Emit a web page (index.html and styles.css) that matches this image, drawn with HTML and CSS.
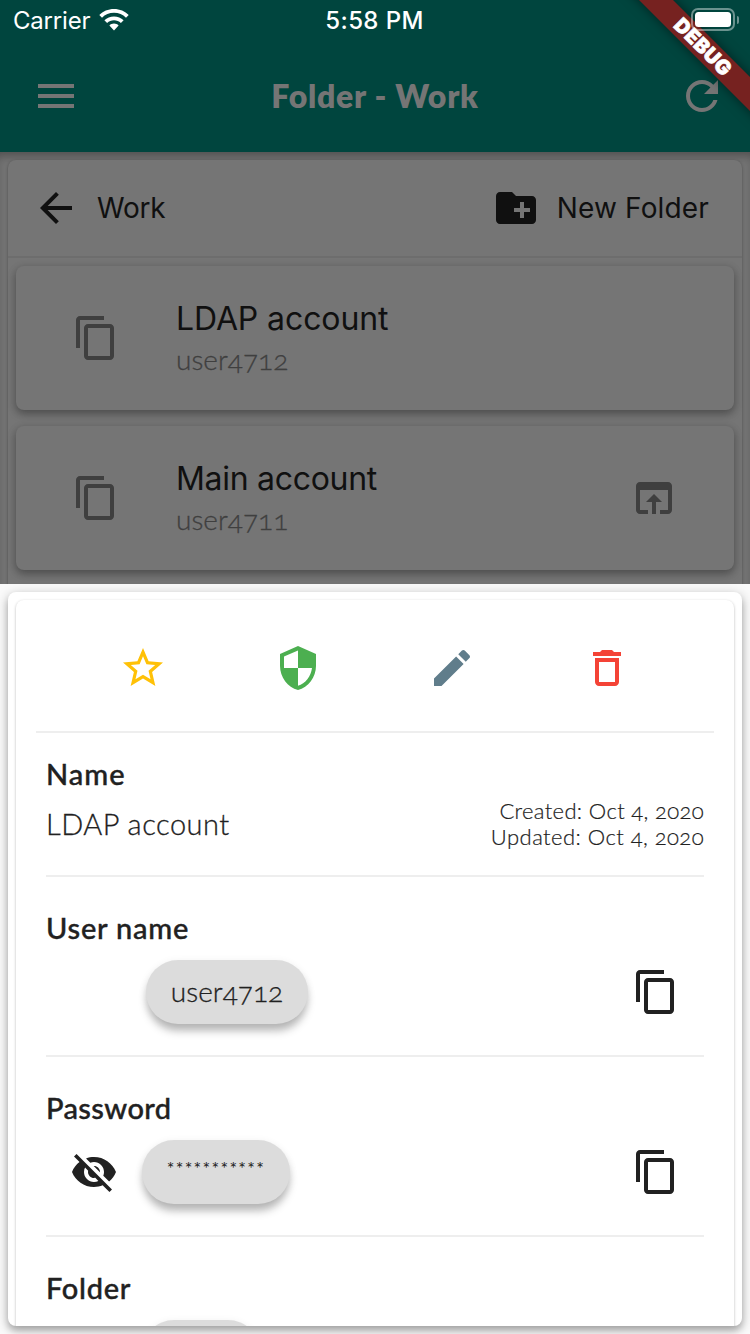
FILE: index.html
```html
<!DOCTYPE html>
<html lang="en">
<head>
<meta charset="utf-8">
<title>Folder - Work</title>
<link rel="stylesheet" href="styles.css">
</head>
<body>
<svg class="defs" aria-hidden="true">
  <symbol id="copy" viewBox="0 0 24 24"><path d="M16 1H4c-1.1 0-2 .9-2 2v14h2V3h12V1zm3 4H8c-1.1 0-2 .9-2 2v14c0 1.1.9 2 2 2h11c1.1 0 2-.9 2-2V7c0-1.1-.9-2-2-2zm0 16H8V7h11v14z"/></symbol>
</svg>
<div class="screen">
  <header class="appbar">
    <div class="status">
      <div class="carrier"><span class="carrier-name">Carrier</span>
        <svg class="wifi" viewBox="0 0 30 22"><path d="M15 0C9.2 0 4 2.200 .3 6L3 8.700C6.100 5.600 10.300 3.800 15 3.800S23.900 5.600 27 8.700L29.700 6C26 2.200 20.800 0 15 0zM15 7.400C11.300 7.400 7.900 8.900 5.400 11.200L8.100 13.900C10 12.200 12.400 11.200 15 11.200S20 12.200 21.900 13.900L24.600 11.200C22.100 8.900 18.700 7.400 15 7.400zM15 14.600C13.200 14.600 11.600 15.300 10.400 16.400L15 21.600 19.600 16.400C18.400 15.300 16.800 14.600 15 14.600z"/></svg>
      </div>
      <span class="clock">5:58 PM</span>
      <div class="battery"><span class="cell"><span class="charge"></span></span><span class="nub"></span></div>
    </div>
    <div class="toolbar">
      <svg class="icon" viewBox="0 0 24 24"><path d="M3 18h18v-2H3v2zm0-5h18v-2H3v2zm0-7v2h18V6H3z"/></svg>
      <h1 class="title"><span class="title-text">Folder - Work</span></h1>
      <svg class="icon" viewBox="0 0 24 24"><path d="M17.650 6.350C16.200 4.900 14.210 4 12 4c-4.420 0-7.990 3.580-7.990 8s3.570 8 7.990 8c3.730 0 6.840-2.550 7.730-6h-2.080c-.82 2.330-3.040 4-5.650 4-3.310 0-6-2.690-6-6s2.690-6 6-6c1.660 0 3.140.69 4.220 1.780L13 11h7V4l-2.350 2.350z"/></svg>
    </div>
    <div class="banner"><span class="banner-text">DEBUG</span></div>
  </header>

  <main class="list">
    <section class="panel">
      <div class="crumbs">
        <svg class="icon" viewBox="0 0 24 24"><path d="M20 11H7.830l5.590-5.590L12 4l-8 8 8 8 1.410-1.410L7.830 13H20v-2z"/></svg>
        <span class="crumb">Work</span>
        <svg class="icon" viewBox="0 0 24 24"><path d="M20 6h-8l-2-2H4c-1.110 0-1.990.89-1.990 2L2 18c0 1.110.89 2 2 2h16c1.110 0 2-.89 2-2V8c0-1.110-.89-2-2-2zm-1 8h-3v3h-2v-3h-3v-2h3V9h2v3h3v2z"/></svg>
        <span class="new-folder">New Folder</span>
      </div>
      <article class="entry">
        <svg class="icon"><use href="#copy"/></svg>
        <div class="entry-text"><span class="entry-name ldap">LDAP account</span><span class="entry-user">user4712</span></div>
      </article>
      <article class="entry">
        <svg class="icon"><use href="#copy"/></svg>
        <div class="entry-text"><span class="entry-name main">Main account</span><span class="entry-user">user4711</span></div>
        <svg class="icon" viewBox="0 0 24 24"><path d="M19 4H5c-1.110 0-2 .9-2 2v12c0 1.100.89 2 2 2h4v-2H5V8h14v10h-4v2h4c1.100 0 2-.9 2-2V6c0-1.100-.89-2-2-2zm-7 6l-4 4h3v6h2v-6h3l-4-4z"/></svg>
      </article>
    </section>
  </main>

  <section class="sheet">
    <div class="sheet-card">
      <div class="detail">
        <div class="actions">
          <svg class="icon star" viewBox="0 0 24 24"><path d="M22 9.240l-7.190-.62L12 2 9.190 8.630 2 9.240l5.460 4.730L5.820 21 12 17.270 18.180 21l-1.630-7.030L22 9.240zM12 15.400l-3.760 2.270 1-4.280-3.320-2.880 4.380-.38L12 6.100l1.710 4.040 4.380.38-3.320 2.880 1 4.280L12 15.400z"/></svg>
          <svg class="icon shield" viewBox="0 0 24 24"><path d="M12 1L3 5v6c0 5.550 3.840 10.740 9 12 5.160-1.260 9-6.450 9-12V5l-9-4zm0 10.990h7c-.53 4.120-3.280 7.790-7 8.940V12H5V6.300l7-3.110v8.800z"/></svg>
          <svg class="icon pencil" viewBox="0 0 24 24"><path d="M3 17.250V21h3.750L17.810 9.940l-3.750-3.750L3 17.250zM20.710 7.040c.39-.39.39-1.020 0-1.410l-2.340-2.340c-.39-.39-1.020-.39-1.410 0l-1.830 1.830 3.750 3.750 1.830-1.830z"/></svg>
          <svg class="icon trash" viewBox="0 0 24 24"><path d="M6 19c0 1.100.9 2 2 2h8c1.100 0 2-.9 2-2V7H6v12zM8 9h8v10H8V9zm7.500-5l-1-1h-5l-1 1H5v2h14V4z"/></svg>
        </div>
        <div class="field name-field">
          <h2 class="label l-name">Name</h2>
          <div class="name-row">
            <span class="value">LDAP account</span>
            <div class="dates"><span class="created">Created: Oct 4, 2020</span><span class="updated">Updated: Oct 4, 2020</span></div>
          </div>
        </div>
        <div class="field">
          <h2 class="label l-user">User name</h2>
          <div class="field-row user-row">
            <span class="chip user-chip"><span class="chip-text">user4712</span></span>
            <svg class="icon"><use href="#copy"/></svg>
          </div>
        </div>
        <div class="field">
          <h2 class="label l-pass">Password</h2>
          <div class="field-row pass-row">
            <svg class="icon" viewBox="0 0 24 24"><path d="M12 7c2.760 0 5 2.240 5 5 0 .65-.13 1.260-.36 1.830l2.920 2.920c1.510-1.260 2.700-2.890 3.430-4.750-1.730-4.390-6-7.500-11-7.500-1.400 0-2.740.25-3.980.7l2.160 2.160C10.740 7.130 11.350 7 12 7zM2 4.270l2.280 2.280.46.46C3.080 8.300 1.780 10.020 1 12c1.730 4.390 6 7.500 11 7.500 1.550 0 3.030-.3 4.380-.84l.42.42L19.730 22 21 20.730 3.270 3 2 4.270zM7.530 9.800l1.550 1.550c-.05.21-.08.43-.08.65 0 1.660 1.340 3 3 3 .22 0 .44-.03.65-.08l1.550 1.550c-.67.33-1.410.53-2.200.53-2.760 0-5-2.240-5-5 0-.79.2-1.530.53-2.200zm4.310-.78l3.150 3.150.02-.16c0-1.660-1.340-3-3-3l-.17.01z"/></svg>
            <span class="chip pass-chip"><span class="stars">***********</span></span>
            <svg class="icon"><use href="#copy"/></svg>
          </div>
        </div>
        <div class="field">
          <h2 class="label l-folder">Folder</h2>
          <div class="field-row folder-row"><span class="chip folder-chip"></span></div>
        </div>
      </div>
    </div>
  </section>
</div>
</body>
</html>
```

FILE: styles.css
```css
* { box-sizing: border-box; }
body { margin: 0; background: #757575; font-family: Inter, "Liberation Sans", sans-serif; }
.defs { display: none; }
.screen { width: 750px; height: 1334px; display: flex; flex-direction: column; overflow: hidden; }
.icon { width: 48px; height: 48px; flex: none; display: block; fill: currentColor; }

.appbar { position: relative; z-index: 1; flex: none; height: 152px; overflow: hidden; background: #00453e; }
.status { position: relative; z-index: 2; display: grid; grid-template-columns: 1fr auto 1fr; align-items: center; height: 40px; padding: 0 11px 0 13px; color: #fff; font-size: 24px; line-height: 40px; white-space: nowrap; }
.carrier { display: flex; align-items: center; gap: 9px; }
.carrier-name { letter-spacing: -.2px; }
.wifi { width: 30px; height: 22px; fill: #fff; }
.status .carrier-name, .status .clock { height: 40px; line-height: 41px; }
.clock { padding-right: 3px; font-weight: 500; letter-spacing: .4px; }
.battery { display: flex; justify-content: flex-end; align-items: center; gap: 2px; padding-bottom: 1px; }
.cell { display: block; width: 44px; height: 23px; padding: 2px; border: 2px solid rgba(255, 255, 255, .42); border-radius: 7px; }
.charge { display: block; height: 15px; border-radius: 3.500px; background: #fff; }
.nub { width: 2px; height: 8px; border-radius: 0 2px 2px 0; background: rgba(255, 255, 255, .42); }
.toolbar { display: flex; align-items: center; height: 112px; padding: 0 24px 0 32px; color: #757575; }
.title { flex: 1; margin: 0; padding-right: 8px; text-align: center; font: 800 32px/48px Lato, "Open Sans", sans-serif; }
.title-text { letter-spacing: .7px; }
.banner { position: absolute; z-index: 1; left: 603px; top: 35px; width: 200px; height: 24px; transform: rotate(45deg); background: #762220; box-shadow: 0 0 12px rgba(0, 0, 0, .5); text-align: center; color: #fff; font: 900 20px/24px Inter, sans-serif; }
.banner-text { letter-spacing: .5px; -webkit-text-stroke: .7px #fff; }

.list { flex: none; height: 432px; padding: 8px 8px 0; background: #737373; overflow: hidden; box-shadow: inset 0 8px 10px -4px rgba(0, 0, 0, .3); }
.panel { height: 500px; border-radius: 8px; background: #757575; box-shadow: 0 1px 3px rgba(0, 0, 0, .35); }
.crumbs { display: flex; align-items: center; height: 98px; padding: 0 33px 0 24px; border-bottom: 2px solid #6d6d6d; color: #101010; font-size: 28px; line-height: 40px; }
.crumb { flex: 1; margin-left: 17px; letter-spacing: -.2px; }
.new-folder { margin-left: 17px; letter-spacing: .15px; }
.entry { display: flex; align-items: center; height: 144px; margin: 8px 8px 16px; padding: 0 56px; border-radius: 8px; background: #757575; color: #3f3f3f; box-shadow: 0 4px 8px rgba(0, 0, 0, .25), 0 2px 10px rgba(0, 0, 0, .14); }
.entry-text { display: flex; flex: 1; flex-direction: column; margin-left: 56px; }
.entry-name { color: #101010; font-size: 32px; line-height: 44px; }
.ldap { letter-spacing: -.1px; }
.main { letter-spacing: -.3px; }
.entry-user { margin-top: -2px; font: 300 28px/40px Lato, sans-serif; font-variant-numeric: oldstyle-nums; -webkit-text-stroke: .3px; }

.sheet { position: relative; z-index: 1; flex: none; height: 750px; padding: 8px; background: #fafafa; }
.sheet-card { height: 734px; padding: 8px 8px 0; overflow: hidden; border-radius: 8px; background: #fff; color: #212121; box-shadow: 0 3px 12px rgba(0, 0, 0, .28), 0 5px 6px rgba(0, 0, 0, .16); }
.detail { height: 760px; border-radius: 8px; background: #fff; box-shadow: 0 1px 3px rgba(0, 0, 0, .28); }
.actions { display: flex; justify-content: space-evenly; height: 133px; margin: 0 20px; padding: 44px 0 0; border-bottom: 2px solid #eee; }
.actions .icon { margin: 0 24px; }
.star { color: #ffc107; }
.shield { color: #4caf50; }
.pencil { color: #607d8b; }
.trash { color: #f44336; }
.field { height: 180px; margin: 0 30px; padding-top: 31px; border-bottom: 2px solid #eee; }
.name-field { height: 144px; padding-top: 21px; }
.label { margin: 0; font: 500 29px/40px Lato, sans-serif; white-space: nowrap; -webkit-text-stroke: .4px; }
.l-name { letter-spacing: 1px; }
.l-user { letter-spacing: .8px; }
.l-pass { letter-spacing: .4px; }
.l-folder { letter-spacing: .7px; }
.name-row { display: flex; justify-content: space-between; padding-top: 4px; }
.value { font: 300 29px/52px Lato, sans-serif; letter-spacing: .5px; -webkit-text-stroke: .3px; }
.dates { display: flex; flex-direction: column; align-items: flex-end; font: 300 22px/26px Lato, sans-serif; font-variant-numeric: oldstyle-nums; -webkit-text-stroke: .2px; }
.created { letter-spacing: .35px; }
.updated { letter-spacing: .45px; }
.field-row { display: flex; margin-top: 12px; padding-right: 24px; }
.field-row .icon { margin-top: 8px; }
.field-row .icon:last-child { margin-left: auto; }
.user-row { padding-left: 100px; }
.pass-row { padding-left: 24px; }
.folder-row { padding-left: 96px; }
.chip { display: flex; justify-content: center; height: 64px; border-radius: 32px; background: #dcdcdc; box-shadow: 0 8px 9px -1px rgba(0, 0, 0, .26), 0 2px 8px rgba(0, 0, 0, .08); font: 300 28px/62px Lato, sans-serif; font-variant-numeric: oldstyle-nums; -webkit-text-stroke: .3px; }
.user-chip { width: 162px; }
.pass-chip { width: 148px; margin-left: 24px; }
.folder-chip { width: 118px; }
.stars { font-size: 18px; font-weight: 400; line-height: 56px; letter-spacing: 1.300px; -webkit-text-stroke: 0; }
```
